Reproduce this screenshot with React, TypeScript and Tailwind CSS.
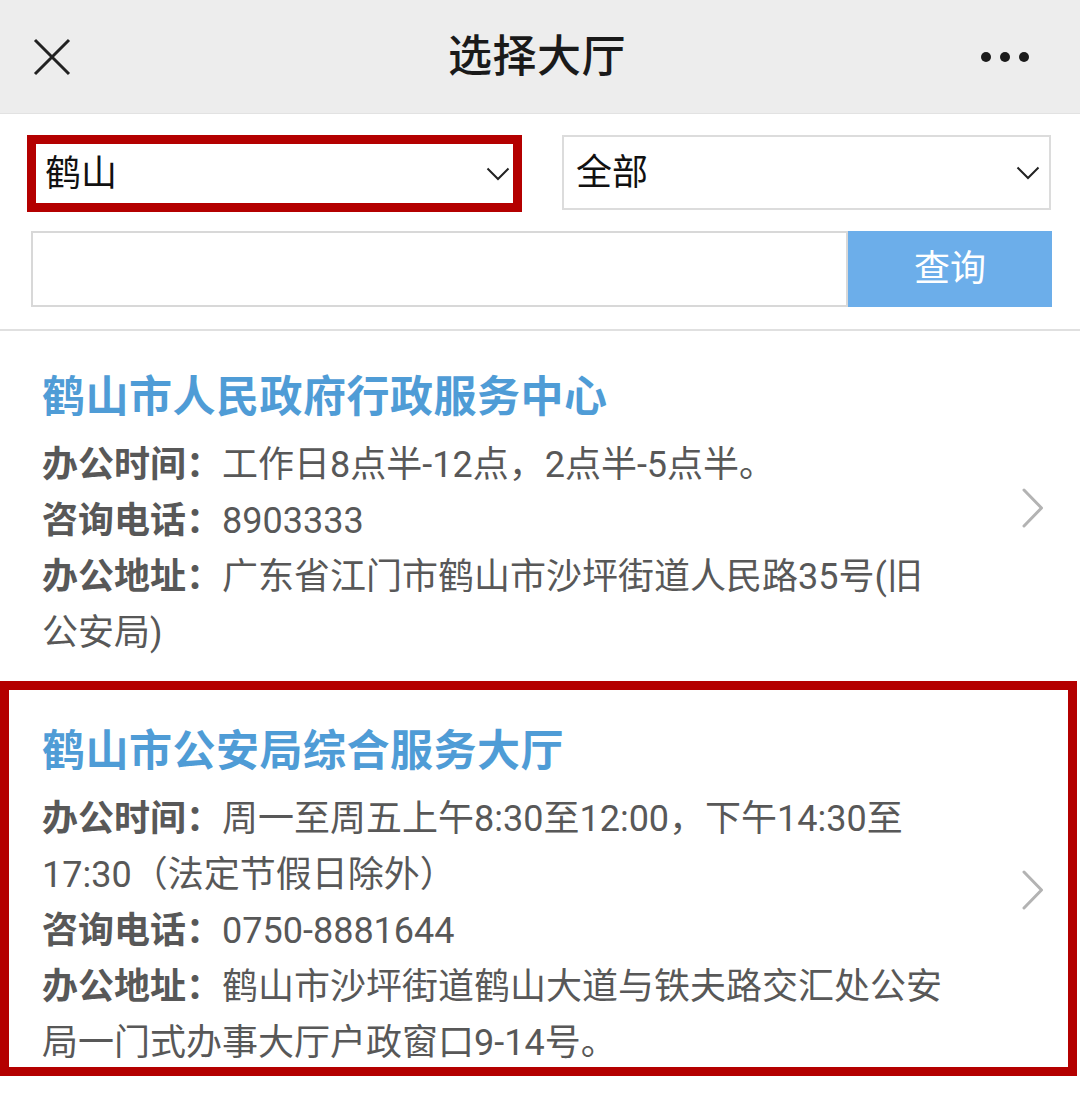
import React from "react";

const FONT = { fontFamily: 'Roboto, "Noto Sans CJK SC", "Noto Sans", sans-serif' };

function Chevron({ className = "" }: { className?: string }) {
  return (
    <svg width="24" height="14" viewBox="0 0 24 14" className={className}>
      <path d="M1.5 1.5 L12 12 L22.5 1.5" fill="none" stroke="#222" strokeWidth="2" />
    </svg>
  );
}

function RightArrow() {
  return (
    <svg width="22" height="40" viewBox="0 0 22 40">
      <path d="M2 2 L19.5 20 L2 38" fill="none" stroke="#b3b3b3" strokeWidth="3" strokeLinecap="round" strokeLinejoin="round" />
    </svg>
  );
}

type Row = { label: string; value: string };

function Item({ title, rows, pb }: { title: string; rows: Row[]; pb: string }) {
  return (
    <div className={`flex items-center pl-[42px] pt-[36px] ${pb}`}>
      <div className="w-[904px]">
        <div className="text-[43px] leading-[60px] font-bold text-[#4f9cd6] tracking-[0.5px]">{title}</div>
        <div className="mt-[10px] text-[36px] leading-[56px] text-[#585858]">
          {rows.map((r, i) => (
            <p key={i}>
              <span className="font-bold">{r.label}：</span>
              {r.value}
            </p>
          ))}
        </div>
      </div>
      <div className="ml-[76px] mb-[12px]">
        <RightArrow />
      </div>
    </div>
  );
}

export default function App() {
  return (
    <div className="w-[1080px] h-[1094px] bg-white overflow-hidden" style={FONT}>
      {/* Header */}
      <div className="h-[114px] bg-[#ededed] border-b border-[#e2e2e2] flex items-center justify-between px-[33px]">
        <svg width="38" height="38" viewBox="0 0 38 38">
          <path d="M2 2 L36 36 M36 2 L2 36" stroke="#222" strokeWidth="3" />
        </svg>
        <div className="text-[44px] font-medium text-[#1a1a1a] ml-[22px] tracking-[0.5px]">选择大厅</div>
        <div className="flex gap-[9px] items-center pr-[18px]">
          <span className="w-[10px] h-[10px] rounded-full bg-[#1a1a1a]" />
          <span className="w-[10px] h-[10px] rounded-full bg-[#1a1a1a]" />
          <span className="w-[10px] h-[10px] rounded-full bg-[#1a1a1a]" />
        </div>
      </div>

      {/* Filters */}
      <div className="pt-[21px] pb-[22px] border-b-2 border-[#e0e0e0]">
        <div className="flex items-center pl-[27px]">
          <div className="w-[495px] h-[77px] border-[9px] border-[#b40000] flex items-center justify-between pl-[9px] pr-[3px]">
            <span className="text-[36px] text-[#111]">鹤山</span>
            <Chevron />
          </div>
          <div className="ml-[40px] w-[489px] h-[75px] border-2 border-[#dcdcdc] flex items-center justify-between pl-[12px] pr-[9px] mb-[2px]">
            <span className="text-[36px] text-[#111]">全部</span>
            <Chevron />
          </div>
        </div>
        <div className="flex mt-[19px] pl-[31px]">
          <div className="w-[817px] h-[76px] border-2 border-[#d8d8d8]" />
          <div className="w-[204px] h-[76px] bg-[#6caeea] flex items-center justify-center text-[36px] text-white">
            查询
          </div>
        </div>
      </div>

      <Item
        title="鹤山市人民政府行政服务中心"
        pb="pb-[24px]"
        rows={[
          { label: "办公时间", value: "工作日8点半-12点，2点半-5点半。" },
          { label: "咨询电话", value: "8903333" },
          { label: "办公地址", value: "广东省江门市鹤山市沙坪街道人民路35号(旧公安局)" },
        ]}
      />

      <div className="relative">
        <Item
          title="鹤山市公安局综合服务大厅"
          pb="pb-[10px]"
          rows={[
            { label: "办公时间", value: "周一至周五上午8:30至12:00，下午14:30至17:30（法定节假日除外）" },
            { label: "咨询电话", value: "0750-8881644" },
            { label: "办公地址", value: "鹤山市沙坪街道鹤山大道与铁夫路交汇处公安局一门式办事大厅户政窗口9-14号。" },
          ]}
        />
        <div className="absolute left-0 top-[-4px] w-[1077px] h-[395px] border-[9px] border-[#b40000] pointer-events-none" />
      </div>
    </div>
  );
}
